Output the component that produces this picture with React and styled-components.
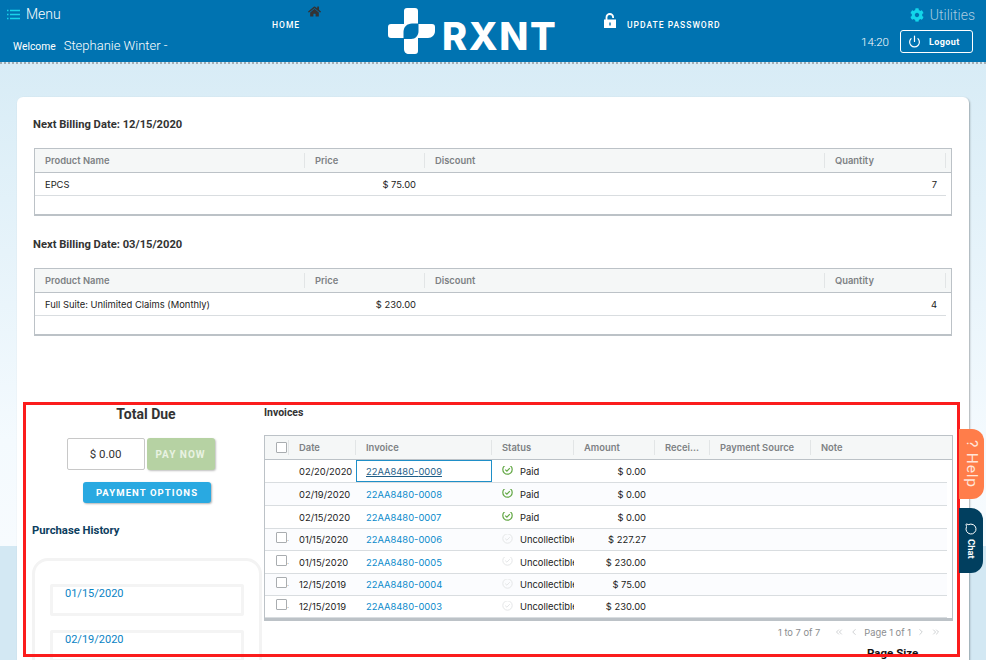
import React from 'react';
import styled, { createGlobalStyle } from 'styled-components';
import { Power, MessageCircle, ChevronLeft, ChevronRight, ChevronsLeft, ChevronsRight } from 'lucide-react';
import { FaHome, FaCog } from 'react-icons/fa';

const GlobalStyle = createGlobalStyle`
  html, body {
    margin: 0;
    padding: 0;
    height: 100%;
    overflow: hidden;
    font-family: 'Inter', 'Liberation Sans', sans-serif;
    color: #222;
  }
`;

const Page = styled.div`
  position: relative;
  width: 986px;
  height: 660px;
  overflow: hidden;
  background:
    linear-gradient(#d6ebf5 0, #d8ecf6 64px, #f4fafe 440px, #f7fbfe 546px, #d3e8f3 546px, #d3e8f3 100%);
`;

const TopBar = styled.header`
  display: flex;
  height: 62px;
  background: #0073b1;
  background-clip: padding-box;
  border-bottom: 2px dotted #a3adb3;
  color: #fff;
  font-family: 'Roboto', sans-serif;
`;

const MenuColumn = styled.div`
  width: 272px;
  padding: 5px 0 0 7px;
  box-sizing: border-box;
`;

const MenuRow = styled.div`
  display: flex;
  align-items: center;
  gap: 6px;
  font-size: 14px;
  font-weight: 300;
  height: 18px;
`;

const WelcomeRow = styled.div`
  display: flex;
  align-items: baseline;
  gap: 8px;
  margin: 15px 0 0 6px;
  font-size: 10.3px;
  span:last-child {
    font-size: 13px;
    font-weight: 300;
  }
`;

const NavLink = styled.div`
  display: flex;
  align-items: flex-start;
  font-size: 8.5px;
  font-weight: 500;
  letter-spacing: 1px;
  line-height: 10px;
  width: ${(p) => p.$width}px;
  padding-top: 3px;
  box-sizing: border-box;
`;

const NavLabel = styled.span`
  margin-top: 17px;
`;

const HomeIcon = styled(FaHome)`
  font-size: 13px;
  color: #333;
  margin: 2px 0 0 8px;
`;

const LockIcon = styled.svg`
  margin: 10px 11px 0 -1px;
`;

const Logo = styled.div`
  display: flex;
  align-items: center;
  gap: 7px;
  width: 217px;
  height: 62px;
  padding-bottom: 1px;
  box-sizing: border-box;
`;

const LogoText = styled.span`
  font-family: 'Inter', sans-serif;
  font-size: 38px;
  font-weight: 800;
  letter-spacing: 1.6px;
  line-height: 1;
  margin-top: 10px;
`;

const RightColumn = styled.div`
  margin-left: auto;
  width: 130px;
  padding: 7px 13px 0 0;
  box-sizing: border-box;
`;

const Utilities = styled.div`
  display: flex;
  justify-content: flex-end;
  align-items: center;
  gap: 6px;
  color: #a9cbe0;
  font-size: 14px;
  font-weight: 300;
  height: 15px;
  margin-right: -2px;
  svg {
    color: #12d6ea;
    font-size: 14px;
  }
`;

const LogoutRow = styled.div`
  display: flex;
  align-items: center;
  justify-content: flex-end;
  gap: 11px;
  margin-top: 8px;
  font-size: 11.5px;
  font-weight: 300;
`;

const LogoutButton = styled.div`
  display: flex;
  align-items: center;
  gap: 8px;
  width: 73px;
  height: 23px;
  box-sizing: border-box;
  padding-left: 7px;
  border: 1px solid #fff;
  border-radius: 3px;
  font-size: 9px;
  font-weight: 700;
  letter-spacing: 0.4px;
`;

const Card = styled.main`
  margin: 33px 0 0 17px;
  width: 952px;
  height: 600px;
  box-sizing: border-box;
  padding: 21px 17px 0 17px;
  background: #fff;
  border-radius: 6px 6px 0 0;
  box-shadow: 1px 1px 2px rgba(0, 0, 0, 0.3);
`;

const BillingTitle = styled.h3`
  margin: 0 0 16px -1px;
  font-family: 'Roboto', sans-serif;
  font-size: 11.2px;
  font-weight: 700;
  line-height: 14px;
  color: #333;
`;

const Grid = styled.div`
  border: 1px solid #bcc2c7;
  border-bottom-width: ${(p) => p.$bottom || 1}px;
  width: ${(p) => p.$width}px;
  box-sizing: border-box;
  margin-bottom: ${(p) => p.$gap || 0}px;
`;

const HeadRow = styled.div`
  display: grid;
  grid-template-columns: ${(p) => p.$cols};
  height: 24px;
  box-sizing: border-box;
  align-items: center;
  background: #f5f7f7;
  border-bottom: 1px solid #bcc2c7;
  font-size: 9.4px;
  font-weight: 600;
  color: #7d8184;
`;

const HeadCell = styled.div`
  height: 15px;
  display: flex;
  align-items: center;
  padding-left: ${(p) => (p.$pad === undefined ? 10 : p.$pad)}px;
  overflow: hidden;
  white-space: nowrap;
  border-right: ${(p) => (p.$last ? 'none' : '1px solid #e2e5e6')};
  box-sizing: border-box;
`;

const BodyRow = styled.div`
  display: grid;
  grid-template-columns: ${(p) => p.$cols};
  height: ${(p) => p.$height || 23}px;
  box-sizing: border-box;
  align-items: center;
  font-size: 9.4px;
  color: #1c1c1c;
  border-bottom: 1px solid #d9dde0;
  background: ${(p) => (p.$odd ? '#fbfcfe' : '#fff')};
  margin-right: ${(p) => p.$inset || 0}px;
`;

const SpacerRow = styled.div`
  height: 18px;
`;

const Cell = styled.div`
  padding: 0 ${(p) => (p.$right ? 9 : 0)}px 0 ${(p) => (p.$right ? 0 : 10)}px;
  text-align: ${(p) => (p.$right ? 'right' : 'left')};
  white-space: nowrap;
  overflow: hidden;
  box-sizing: border-box;
`;

const BottomArea = styled.section`
  display: flex;
  margin: 70px 0 0 -2px;
`;

const LeftPanel = styled.aside`
  width: 230px;
  flex: none;
  margin-right: 2px;
  display: flex;
  flex-direction: column;
`;

const TotalTitle = styled.h2`
  margin: 0;
  padding-right: 2px;
  text-align: center;
  font-family: 'Roboto', sans-serif;
  font-size: 14px;
  font-weight: 700;
  line-height: 16px;
  color: #333;
`;

const PayRow = styled.div`
  display: flex;
  justify-content: center;
  gap: 2px;
  margin-top: 16px;
  padding-right: 13px;
`;

const AmountBox = styled.div`
  width: 78px;
  height: 32px;
  display: flex;
  align-items: center;
  justify-content: center;
  box-sizing: border-box;
  border: 1px solid #c8c8c8;
  border-radius: 2px;
  font-family: 'Roboto', sans-serif;
  font-size: 11.5px;
  color: #333;
`;

const PayButton = styled.div`
  width: 68px;
  height: 32px;
  display: flex;
  align-items: center;
  justify-content: center;
  background: #b6d2a3;
  border-radius: 3px;
  box-shadow: 1px 1px 2px rgba(0, 0, 0, 0.25);
  color: #e9f2e2;
  font-family: 'Roboto', sans-serif;
  font-size: 10px;
  font-weight: 700;
  letter-spacing: 1px;
`;

const OptionsButton = styled.div`
  align-self: center;
  width: 128px;
  height: 21px;
  margin-top: 12px;
  display: flex;
  align-items: center;
  justify-content: center;
  background: #29a9e1;
  border-radius: 3px;
  box-shadow: 1px 1px 2px rgba(0, 0, 0, 0.3);
  color: #fff;
  font-family: 'Roboto', sans-serif;
  font-size: 9.5px;
  font-weight: 700;
  letter-spacing: 1.1px;
`;

const HistoryTitle = styled.h4`
  margin: 21px 0 0;
  font-family: 'Roboto', sans-serif;
  font-size: 11.3px;
  font-weight: 700;
  line-height: 14px;
  color: #0d3e5e;
`;

const HistoryBox = styled.div`
  margin-top: 20px;
  height: 140px;
  padding: 23px 15px 0;
  box-sizing: border-box;
  border: 3px solid #f3f3f3;
  border-radius: 16px;
  display: flex;
  flex-direction: column;
  gap: 14px;
`;

const HistoryItem = styled.div`
  height: 32px;
  flex: none;
  padding: 0 0 0 12px;
  box-sizing: border-box;
  border: 3px solid #f4f4f4;
  border-radius: 2px;
  font-family: 'Roboto', sans-serif;
  font-size: 11px;
  line-height: 14px;
  color: #0a83c4;
`;

const InvoicePanel = styled.div`
  flex: 1;
  min-width: 0;
`;

const InvoiceTitle = styled.h4`
  margin: 1px 0 16px;
  font-family: 'Roboto', sans-serif;
  font-size: 10.5px;
  font-weight: 700;
  line-height: 12px;
  color: #333;
`;

const CheckBox = styled.span`
  display: inline-block;
  width: 11px;
  height: 11px;
  box-sizing: border-box;
  border: 1px solid #a9adb0;
  border-radius: 1px;
  background: #fff;
`;

const CheckCell = styled.div`
  padding-left: 11px;
  margin-bottom: 4px;
  display: flex;
  align-items: flex-end;
  overflow: hidden;
  font-size: 7px;
  line-height: 9px;
  color: #9a9a9a;
`;

const InvoiceLink = styled.a`
  color: ${(p) => (p.$active ? '#1e5d87' : '#0a8acb')};
  text-decoration: ${(p) => (p.$active ? 'underline' : 'none')};
`;

const FocusCell = styled(Cell)`
  height: 100%;
  display: flex;
  align-items: center;
  ${(p) => p.$active && 'box-shadow: inset 0 0 0 1px #1f8fc8;'}
`;

const StatusCell = styled(Cell)`
  display: flex;
  align-items: center;
  gap: 7px;
  svg {
    flex: none;
    margin-top: -3px;
  }
`;

const Pager = styled.div`
  display: flex;
  align-items: center;
  justify-content: flex-end;
  height: 22px;
  padding-right: 11px;
  font-size: 9.3px;
  color: #8b8e90;
  svg {
    color: #c5c8ca;
  }
`;

const PagerCount = styled.span`
  margin-right: 14px;
`;

const PagerGap = styled.span`
  display: inline-flex;
  margin: 0 ${(p) => p.$size}px;
`;

const PageSize = styled.div`
  margin: 3px 0 0 603px;
  font-family: 'Roboto', sans-serif;
  font-size: 11.5px;
  font-weight: 700;
  line-height: 14px;
  color: #111;
`;

const SideTab = styled.div`
  position: absolute;
  left: 959px;
  top: ${(p) => p.$top}px;
  width: ${(p) => p.$width}px;
  height: ${(p) => p.$height}px;
  background: ${(p) => p.$bg};
  border-radius: 0 12px 12px 0;
  display: flex;
  align-items: center;
  justify-content: center;
  gap: 4px;
  writing-mode: vertical-rl;
  font-family: 'Roboto', sans-serif;
  color: #fff;
`;

const HelpText = styled.span`
  font-size: 15.5px;
  font-weight: 400;
  letter-spacing: 0.8px;
  color: #ffe6da;
`;

const ChatText = styled.span`
  font-size: 9.5px;
  font-weight: 700;
`;

const ChatIcon = styled(MessageCircle)`
  transform: rotate(90deg);
`;

const RedFrame = styled.div`
  position: absolute;
  left: 23px;
  top: 402px;
  width: 937px;
  height: 255px;
  box-sizing: border-box;
  border: 3px solid #fb1c1c;
  pointer-events: none;
`;

const products = [
  { date: '12/15/2020', name: 'EPCS', price: '$ 75.00', qty: 7 },
  { date: '03/15/2020', name: 'Full Suite: Unlimited Claims (Monthly)', price: '$ 230.00', qty: 4 },
];

const invoices = [
  { date: '02/20/2020', no: '0009', status: 'Paid', amount: '$ 0.00', h: 23, active: true },
  { date: '02/19/2020', no: '0008', status: 'Paid', amount: '$ 0.00', h: 23 },
  { date: '02/15/2020', no: '0007', status: 'Paid', amount: '$ 0.00', h: 23 },
  { date: '01/15/2020', no: '0006', status: 'Uncollectible', amount: '$ 227.27', h: 22, check: true },
  { date: '01/15/2020', no: '0005', status: 'Uncollectible', amount: '$ 230.00', h: 23, check: true },
  { date: '12/15/2019', no: '0004', status: 'Uncollectible', amount: '$ 75.00', h: 22, check: true },
  { date: '12/15/2019', no: '0003', status: 'Uncollectible', amount: '$ 230.00', h: 22, check: true },
];

const productCols = '270px 120px 400px 121px 1fr';
const invoiceCols = '24px 67px 136px 82px 81px 55px 101px 1fr';

function LogoMark() {
  return (
    <svg width="47" height="46" viewBox="0 0 47 46" fill="#fff">
      <path d="M16 3a3 3 0 0 1 3-3h8a3 3 0 0 1 3 3v13h14a3 3 0 0 1 3 3v4c0 4-3 7-7 7H30v13a3 3 0 0 1-3 3h-6c-3 0-5-2-5-5V30H3a3 3 0 0 1-3-3v-8c0-2 1-3 3-3h13z" />
      <path d="M30.5 15.5H24c-5 0-8.5 3.5-8.5 8.5v7H23c4.5 0 7.5-3.5 7.5-8z" fill="#0073b1" />
    </svg>
  );
}

function MenuIcon() {
  return (
    <svg width="13" height="11" viewBox="0 0 13 11" stroke="#19d3ea" strokeWidth="1.3">
      <path d="M3 1.5h10M3 5.5h10M3 9.5h10M0 1.5h1.5M0 5.5h1.5M0 9.5h1.5" />
    </svg>
  );
}

function StatusIcon({ paid }) {
  const color = paid ? '#62a744' : '#e4e6e7';
  return (
    <svg width="11" height="11" viewBox="0 0 11 11" fill="none" stroke={color} strokeWidth={paid ? 1.2 : 1}>
      <circle cx="5.5" cy="5.5" r="4.7" />
      <path d="M3.2 5.6l1.7 1.6 2.9-3" />
    </svg>
  );
}

function ProductTable({ item }) {
  return (
    <>
      <BillingTitle>Next Billing Date: {item.date}</BillingTitle>
      <Grid $width={918} $gap={22} $bottom={2}>
        <HeadRow $cols={productCols}>
          <HeadCell>Product Name</HeadCell>
          <HeadCell>Price</HeadCell>
          <HeadCell>Discount</HeadCell>
          <HeadCell>Quantity</HeadCell>
          <HeadCell $last />
        </HeadRow>
        <BodyRow $cols={productCols} $inset={5}>
          <Cell>{item.name}</Cell>
          <Cell $right>{item.price}</Cell>
          <Cell />
          <Cell $right>{item.qty}</Cell>
          <Cell />
        </BodyRow>
        <SpacerRow />
      </Grid>
    </>
  );
}

export default function App() {
  return (
    <Page>
      <GlobalStyle />
      <TopBar>
        <MenuColumn>
          <MenuRow>
            <MenuIcon />
            Menu
          </MenuRow>
          <WelcomeRow>
            <span>Welcome</span>
            <span>Stephanie Winter -</span>
          </WelcomeRow>
        </MenuColumn>
        <NavLink $width={116}>
          <NavLabel>HOME</NavLabel>
          <HomeIcon />
        </NavLink>
        <Logo>
          <LogoMark />
          <LogoText>RXNT</LogoText>
        </Logo>
        <NavLink $width={180}>
          <LockIcon width="12" height="15" viewBox="0 0 12 15">
            <path d="M2.5 7V4.3a3.3 3.3 0 0 1 6.600 0v.8" fill="none" stroke="#fff" strokeWidth="1.8" />
            <path d="M0 6.500h12V15H0z" fill="#fff" />
            <path d="M5.300 9.500h1.400v3H5.300z" fill="#0073b1" />
          </LockIcon>
          <NavLabel>UPDATE PASSWORD</NavLabel>
        </NavLink>
        <RightColumn>
          <Utilities>
            <FaCog />
            Utilities
          </Utilities>
          <LogoutRow>
            <span>14:20</span>
            <LogoutButton>
              <Power size={13} strokeWidth={2.2} />
              Logout
            </LogoutButton>
          </LogoutRow>
        </RightColumn>
      </TopBar>

      <Card>
        {products.map((p) => (
          <ProductTable key={p.date} item={p} />
        ))}

        <BottomArea>
          <LeftPanel>
            <TotalTitle>Total Due</TotalTitle>
            <PayRow>
              <AmountBox>$ 0.00</AmountBox>
              <PayButton>PAY NOW</PayButton>
            </PayRow>
            <OptionsButton>PAYMENT OPTIONS</OptionsButton>
            <HistoryTitle>Purchase History</HistoryTitle>
            <HistoryBox>
              <HistoryItem>01/15/2020</HistoryItem>
              <HistoryItem>02/19/2020</HistoryItem>
            </HistoryBox>
          </LeftPanel>

          <InvoicePanel>
            <InvoiceTitle>Invoices</InvoiceTitle>
            <Grid $width={689} $bottom={3}>
              <HeadRow $cols={invoiceCols}>
                <HeadCell $pad={11}>
                  <CheckBox />
                </HeadCell>
                <HeadCell>Date</HeadCell>
                <HeadCell>Invoice</HeadCell>
                <HeadCell>Status</HeadCell>
                <HeadCell>Amount</HeadCell>
                <HeadCell>Recei...</HeadCell>
                <HeadCell>Payment Source</HeadCell>
                <HeadCell $last>Note</HeadCell>
              </HeadRow>
              {invoices.map((r, i) => (
                <BodyRow key={r.no} $cols={invoiceCols} $height={r.h} $odd={i % 2 === 1} $inset={5}>
                  <CheckCell>
                    {r.check && (
                      <>
                        <CheckBox />.
                      </>
                    )}
                  </CheckCell>
                  <Cell>{r.date}</Cell>
                  <FocusCell $active={r.active}>
                    <InvoiceLink $active={r.active}>22AA8480-{r.no}</InvoiceLink>
                  </FocusCell>
                  <StatusCell>
                    <StatusIcon paid={r.status === 'Paid'} />
                    <span>{r.status}</span>
                  </StatusCell>
                  <Cell $right>{r.amount}</Cell>
                  <Cell />
                  <Cell />
                  <Cell />
                </BodyRow>
              ))}
            </Grid>
            <Pager>
              <PagerCount>1 to 7 of 7</PagerCount>
              <ChevronsLeft size={10} />
              <PagerGap $size={5}>
                <ChevronLeft size={10} />
              </PagerGap>
              <span>Page 1 of 1</span>
              <PagerGap $size={5}>
                <ChevronRight size={10} />
              </PagerGap>
              <ChevronsRight size={10} />
            </Pager>
            <PageSize>Page Size</PageSize>
          </InvoicePanel>
        </BottomArea>
      </Card>

      <RedFrame />
      <SideTab $top={429} $width={25} $height={70} $bg="#ff7d4a">
        <HelpText>? Help</HelpText>
      </SideTab>
      <SideTab $top={508} $width={24} $height={65} $bg="#013f5f">
        <ChatIcon size={12} />
        <ChatText>Chat</ChatText>
      </SideTab>
    </Page>
  );
}
